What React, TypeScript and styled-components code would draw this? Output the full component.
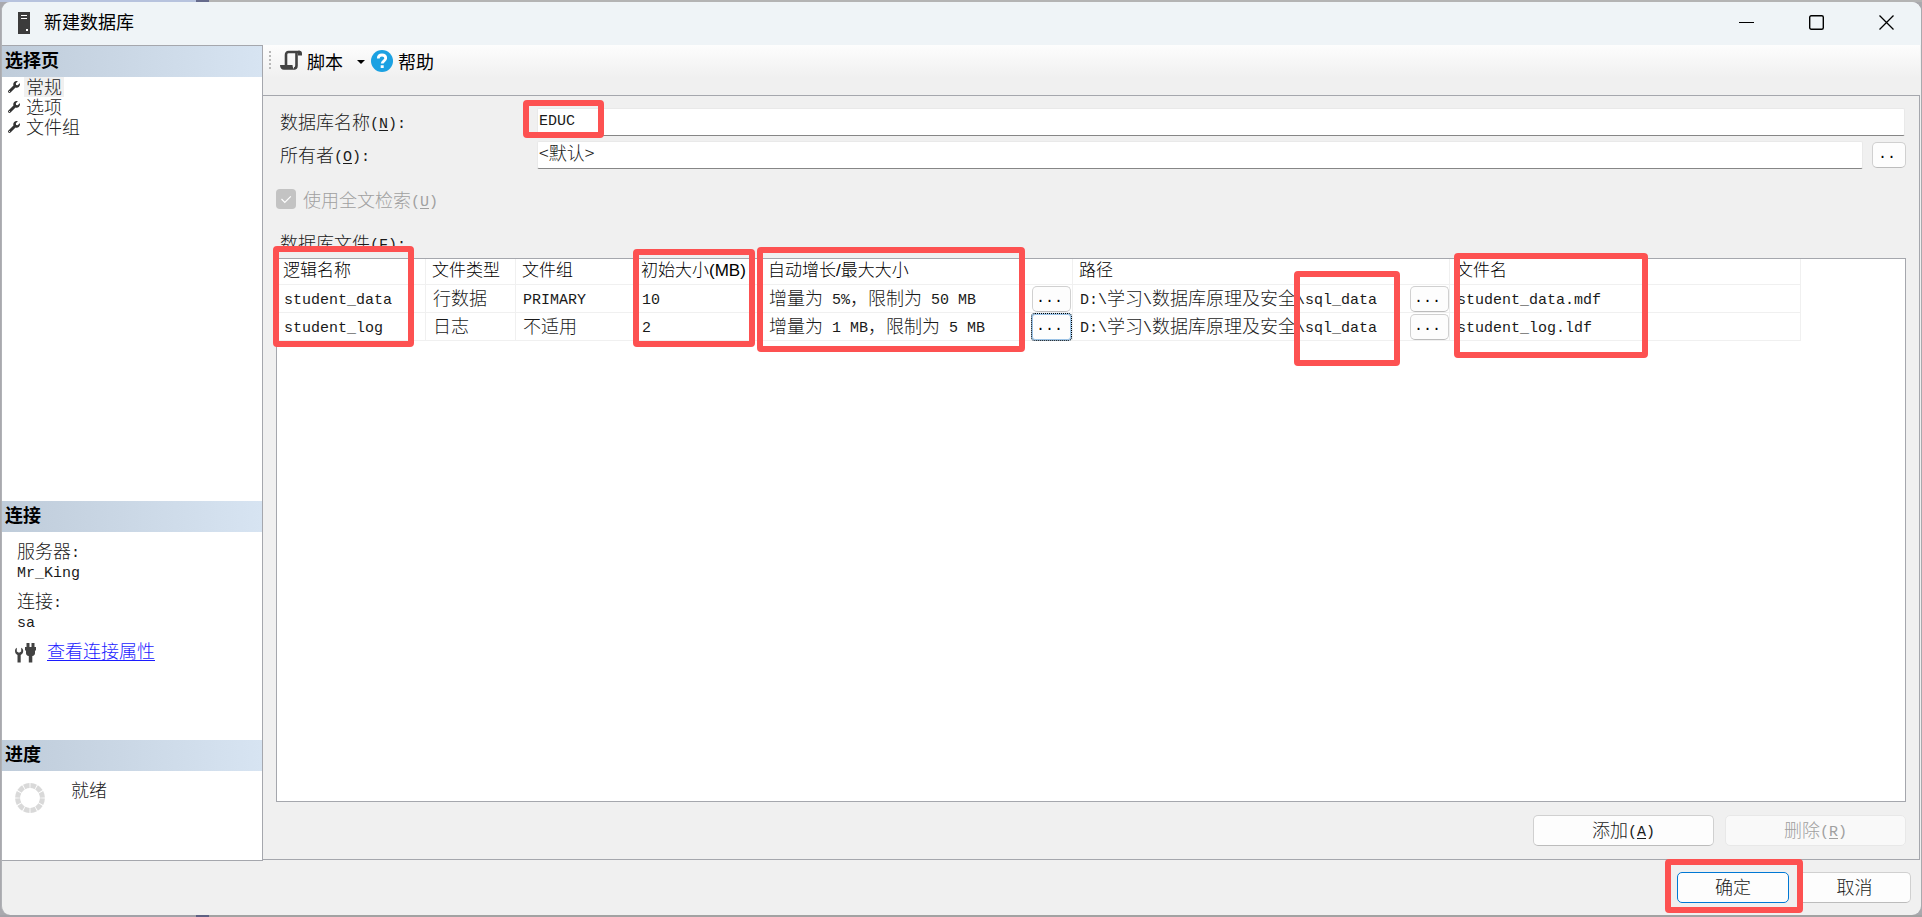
import React from 'react';
import styled, { createGlobalStyle, css } from 'styled-components';
import { FaWrench } from 'react-icons/fa';

const cjk = '"Noto Sans CJK SC", sans-serif';
const ui = '"Liberation Sans", "Noto Sans CJK SC", sans-serif';
const line = '#a5a7ad';
const gridLine = '#f0f0f0';

const Global = createGlobalStyle`
  *, *::before, *::after { box-sizing: border-box; }
  body {
    margin: 0;
    color: #1a1a1a;
    background: #b4b4b4;
    font: 300 18px/20px ${cjk};
  }
  button, input { font: inherit; color: inherit; margin: 0; }
`;

const Desktop = styled.div`
  min-height: 100vh;
  display: flex;
  padding: 2px 1px;
  background:
    linear-gradient(90deg, #b7c3de 0 196px, #666b8c 196px 209px, #b4b4b4 209px) top / 100% 2px no-repeat,
    linear-gradient(90deg, #a2a2a8 0 196px, #5e6282 196px 209px, #a2a2a2 209px) bottom / 100% 2px no-repeat,
    #a9a9ae;
`;

const Dialog = styled.main`
  flex: 1;
  min-width: 0;
  display: flex;
  flex-direction: column;
  background: #f0f0f0;
  border: solid #b0b2b6;
  border-width: 0 0 0 1px;
  border-radius: 9px;
  overflow: hidden;
`;

const TitleBar = styled.header`
  height: 43px;
  flex: none;
  display: flex;
  align-items: center;
  padding: 0 0 2px 16px;
  background: #eff4f7;
`;

const Title = styled.h1`
  flex: 1;
  margin: 0 0 0 14px;
  padding-bottom: 3px;
  font: 400 18px/20px ${cjk};
  color: #000;
`;

const CaptionButton = styled.button`
  width: 70px;
  height: 41px;
  padding: 0;
  border: 0;
  background: none;
  display: grid;
  place-items: center;
`;

const Body = styled.div`
  flex: 1;
  display: flex;
  min-height: 0;
`;

const Sidebar = styled.aside`
  width: 261px;
  flex: none;
  display: flex;
  flex-direction: column;
  background: #fff;
  border: solid ${line};
  border-width: 1px 1px 1px 0;
`;

const SectionTitle = styled.h2`
  height: 31px;
  margin: 0;
  padding: 1px 3px;
  font: 700 18px/24px ${cjk};
  color: #000;
  background: linear-gradient(90deg, #bfccda, #d7e4f2);
`;

const PageList = styled.nav`
  flex: 1;
  display: flex;
  flex-direction: column;
  align-items: flex-start;
`;

const PageLink = styled.a<{ $active?: boolean }>`
  display: flex;
  align-items: center;
  height: 20px;
  padding-left: 6px;
  color: inherit;
  text-decoration: none;

  svg { color: #333; }

  span {
    margin-left: 4px;
    padding: 0 2px 2px;
    line-height: 18px;
    background: ${p => (p.$active ? '#f0f0f0' : 'transparent')};
  }
`;

const Connection = styled.dl`
  height: 208px;
  margin: 0;
  padding: 8px 15px;

  dt { line-height: 20px; }
  dd { margin: 0 0 10px; line-height: 20px; }
`;

const ConnectionLink = styled.div`
  display: flex;
  align-items: flex-start;
  gap: 11px;
  margin-left: -2px;

  svg { margin-top: 3px; }
  a { color: #1c1cff; text-underline-offset: 2px; text-decoration-thickness: 1px; }
`;

const Progress = styled.div`
  height: 89px;
  display: flex;
  align-items: flex-start;
  gap: 26px;
  padding: 8px 13px;

  svg { margin-top: 4px; }
`;

const Main = styled.div`
  flex: 1;
  min-width: 0;
  display: flex;
  flex-direction: column;
  padding-right: 1px;
`;

const Toolbar = styled.div`
  height: 50px;
  flex: none;
  display: flex;
  align-items: flex-start;
  padding: 4px 6px;
  background: linear-gradient(#fdfdfd, #f0f0f0 33px);
`;

const Grip = styled.span`
  width: 2px;
  height: 20px;
  margin: 2px 9px 0 0;
  background: repeating-linear-gradient(#b8b8b8 0 2px, transparent 2px 4px);
`;

const ToolButton = styled.button`
  display: flex;
  align-items: center;
  gap: 5px;
  height: 23px;
  padding: 0;
  border: 0;
  background: none;
  font: 400 18px/20px ${cjk};
  color: #000;
`;

const DropMark = styled.button`
  width: 28px;
  height: 25px;
  padding: 0 0 0 14px;
  border: 0;
  background: none;
  display: flex;
  align-items: center;

  &::before {
    content: '';
    border: solid transparent;
    border-width: 4px 4px 0;
    border-top-color: #000;
  }
`;

const Panel = styled.section`
  flex: 1;
  display: flex;
  flex-direction: column;
  margin-bottom: 1px;
  padding: 12px 13px 13px;
  border: solid ${line};
  border-width: 1px 1px 1px 0;
`;

const Field = styled.div`
  position: relative;
  display: flex;
  align-items: center;
  height: 28px;
  margin-bottom: 5px;
  padding-left: 4px;

  label { width: 257px; flex: none; padding-bottom: 3px; }
`;

const TextBox = styled.input`
  flex: 1;
  min-width: 0;
  height: 28px;
  padding: 0 1px 6px;
  border: 1px solid #e9e9e9;
  border-bottom-color: #868686;
  border-radius: 2px;
  background: #fff;
  outline: 0;
`;

const NameBox = styled(TextBox)`
  margin-right: 1px;
  padding-bottom: 2px;
  font: 15px/20px "Liberation Mono", monospace;
`;

const buttonFace = css`
  border: 1px solid #d0d0d0;
  border-bottom-color: #bcbcbc;
  border-radius: 5px;
  background: #fdfdfd;
`;

const DotsButton = styled.button<{ $focused?: boolean }>`
  ${buttonFace}
  display: block;
  width: 39px;
  height: 26px;
  padding: 0 4px 0 0;
  font: 15px/20px "Liberation Mono", monospace;
  color: #000;
  ${p => p.$focused && css`
    border-color: #9cc3e6;
    border-radius: 3px;
    box-shadow: 0 0 0 1px #b5d5f0;
    outline: 1px dotted #000;
  `}
`;

const OwnerButton = styled(DotsButton)`
  width: 34px;
  margin-left: 9px;
`;

const CheckRow = styled.label`
  display: flex;
  align-items: center;
  gap: 7px;
  height: 20px;
  margin: 15px 0 23px;
  color: #a0a0a0;

  span { padding-bottom: 1px; }
`;

const CheckBox = styled.input`
  appearance: none;
  width: 20px;
  height: 20px;
  border-radius: 4px;
  background: #c3c3c3 url("data:image/svg+xml,%3Csvg xmlns='http://www.w3.org/2000/svg' width='20' height='20' fill='none' stroke='white' stroke-width='1.2'%3E%3Cpath d='M5.5 10l3.3 3.3 6-6'/%3E%3C/svg%3E");
`;

const GridLabel = styled.div`
  height: 26px;
  padding-left: 4px;
`;

const Grid = styled.div`
  position: relative;
  flex: 1;
  background: #fff;
  border: 1px solid ${line};
`;

const FileTable = styled.table`
  width: 1524px;
  table-layout: fixed;
  border-spacing: 0;
  white-space: nowrap;

  th, td {
    padding: 0 0 3px 7px;
    border: solid ${gridLine};
    border-width: 0 1px 1px 0;
    text-align: left;
  }
  th {
    height: 26px;
    padding: 0 0 2px 6px;
    font: 300 17px/20px ${ui};
    color: #000;
  }
  td { height: 28px; }
`;

const OpenCell = styled.td`
  && { border-right: 0; }
`;

const ButtonCell = styled.td`
  && { padding: 0 0 0 2px; }
`;

const GridActions = styled.div`
  display: flex;
  justify-content: flex-end;
  gap: 11px;
  margin-top: 13px;
`;

const Button = styled.button<{ $width: number; $default?: boolean }>`
  ${buttonFace}
  width: ${p => p.$width}px;
  height: 31px;
  padding: 0 0 3px;
  ${p => p.$default && css`border-color: #0078d4;`}

  &:disabled { color: #a0a0a0; border-color: #e8e8e8; background: #f9f9f9; }
`;

const Footer = styled.footer`
  height: 54px;
  flex: none;
  display: flex;
  justify-content: flex-end;
  gap: 9px;
  padding: 11px 10px 0 0;
`;

const Marked = styled.div`
  position: relative;
  height: 31px;
`;

const Mark = styled.span<{ $x: number; $y: number; $w: number; $h: number }>`
  position: absolute;
  z-index: 1;
  left: ${p => p.$x}px;
  top: ${p => p.$y}px;
  width: ${p => p.$w}px;
  height: ${p => p.$h}px;
  border: 6px solid #fd5151;
  border-radius: 4px;
  pointer-events: none;
`;

const Latin = styled.span`
  font-family: "Liberation Mono", monospace;
  font-size: 15px;
  font-weight: 400;
  line-height: 0;
  vertical-align: 1px;
  white-space: pre;
`;

const Key = styled.u`
  text-underline-offset: 2px;
`;

/* Sets Latin runs in the half-width face beside full-width characters. */
function Text({ children, hotkey }: { children: string; hotkey?: string }) {
  const runs = children.match(/[\x20-\x7e]+|[^\x20-\x7e]+/g) ?? [];
  return (
    <>
      {runs.map((run, i) => (/[\x20-\x7e]/.test(run) ? <Latin key={i}>{run}</Latin> : run))}
      {hotkey && <Latin>(<Key>{hotkey}</Key>)</Latin>}
    </>
  );
}

const ServerIcon = () => (
  <svg width="12" height="22" viewBox="0 0 12 22">
    <path fill="#3c3c3c" d="M0 0h12v22H0z" />
    <path stroke="#fff" d="M3 3.5h6M3 6.5h6" />
    <path fill="#fff" d="M8 17h2v2H8z" />
  </svg>
);

const ScriptIcon = () => (
  <svg width="22" height="21" viewBox="0 0 22 21" fill="none" stroke="#424242" strokeWidth="2.6">
    <path d="M6 15V5C6 3 7 2 8.500 2H20M16.500 3v12.500c0 2-1 3-2.500 3" />
    <path fill="#424242" stroke="none" d="M18 .700h1.500C21.200.700 22 2 22 3.500V5.500h-4z" />
    <path fill="#424242" stroke="none" d="M0 15h12.500c0 2 .7 3 2 4.800H4C1.500 19.800 0 18 0 15z" />
  </svg>
);

const HelpIcon = () => (
  <svg width="22" height="22" viewBox="0 0 22 22" fill="none">
    <circle cx="11" cy="11" r="11" fill="#1ba1e2" />
    <path d="M7.300 8.600C7.300 6.300 9 5 11 5s3.700 1.200 3.700 3.200c0 2.500-3.500 2.700-3.500 5.400" stroke="#fff" strokeWidth="2.800" />
    <path fill="#fff" d="M9.700 15.200h3v2.800h-3z" />
  </svg>
);

const PlugIcon = () => (
  <svg width="21" height="20" viewBox="0 0 21 20" fill="#424242">
    <path d="M0 8C0 6.500.7 5.400 1.800 4.800V8.500L4 9.800 6.200 8.500V4.800C7.400 5.400 8.200 6.500 8.200 8c0 2-1 3.200-2.500 4v7.500H2.500V12C1 11.200 0 10 0 8z" />
    <path d="M11.500 0h3v4h2V0h3v4H21v3.500h-1V10c0 1.700-1 2.800-2.700 3v6.500h-3.500V13C12 12.800 11 11.700 11 10V7.500h-1V4h1.500z" />
  </svg>
);

const Spinner = () => (
  <svg width="30" height="30" viewBox="0 0 30 30">
    <circle cx="15" cy="15" r="12.400" fill="none" stroke="#d9d9d9" strokeWidth="5" pathLength="120" strokeDasharray="8.600 1.400" strokeDashoffset="-0.700" />
  </svg>
);

const columns = [149, 90, 119, 127, 268, 43, 335, 42, 351];

const files = [
  { name: 'student_data', type: '行数据', group: 'PRIMARY', size: '10', growth: '增量为 5%，限制为 50 MB', file: 'student_data.mdf' },
  { name: 'student_log', type: '日志', group: '不适用', size: '2', growth: '增量为 1 MB，限制为 5 MB', file: 'student_log.ldf', focused: true },
];

export default function App() {
  return (
    <Desktop>
      <Global />
      <Dialog>
        <TitleBar>
          <ServerIcon />
          <Title>新建数据库</Title>
          <CaptionButton aria-label="最小化">
            <svg width="15" height="15"><path d="M0 7.500h15" stroke="#000" /></svg>
          </CaptionButton>
          <CaptionButton aria-label="最大化">
            <svg width="15" height="15"><rect x=".7" y=".7" width="13.600" height="13.600" rx="1.500" fill="none" stroke="#000" strokeWidth="1.400" /></svg>
          </CaptionButton>
          <CaptionButton aria-label="关闭">
            <svg width="15" height="15"><path d="M.5.5l14 14M14.500.5l-14 14" stroke="#000" strokeWidth="1.300" /></svg>
          </CaptionButton>
        </TitleBar>
        <Body>
          <Sidebar>
            <SectionTitle>选择页</SectionTitle>
            <PageList>
              {['常规', '选项', '文件组'].map((page, i) => (
                <PageLink href="#" key={page} $active={i === 0}>
                  <FaWrench size={12} />
                  <span>{page}</span>
                </PageLink>
              ))}
            </PageList>
            <SectionTitle>连接</SectionTitle>
            <Connection>
              <dt><Text>服务器:</Text></dt>
              <dd><Text>Mr_King</Text></dd>
              <dt><Text>连接:</Text></dt>
              <dd><Text>sa</Text></dd>
              <ConnectionLink>
                <PlugIcon />
                <a href="#">查看连接属性</a>
              </ConnectionLink>
            </Connection>
            <SectionTitle>进度</SectionTitle>
            <Progress>
              <Spinner />
              <span>就绪</span>
            </Progress>
          </Sidebar>
          <Main>
            <Toolbar>
              <Grip />
              <ToolButton><ScriptIcon />脚本</ToolButton>
              <DropMark aria-label="脚本选项" />
              <ToolButton><HelpIcon />帮助</ToolButton>
            </Toolbar>
            <Panel>
              <Field>
                <label htmlFor="db-name"><Text hotkey="N">数据库名称</Text><Latin>:</Latin></label>
                <NameBox id="db-name" defaultValue="EDUC" />
                <Mark $x={247} $y={-8} $w={81} $h={38} />
              </Field>
              <Field>
                <label htmlFor="owner"><Text hotkey="O">所有者</Text><Latin>:</Latin></label>
                <TextBox id="owner" defaultValue="<默认>" />
                <OwnerButton>..</OwnerButton>
              </Field>
              <CheckRow>
                <CheckBox type="checkbox" defaultChecked disabled />
                <span><Text hotkey="U">使用全文检索</Text></span>
              </CheckRow>
              <GridLabel id="files-label"><Text hotkey="F">数据库文件</Text><Latin>:</Latin></GridLabel>
              <Grid>
                <FileTable aria-labelledby="files-label">
                  <colgroup>
                    {columns.map((width, i) => <col key={i} width={width} />)}
                  </colgroup>
                  <thead>
                    <tr>
                      <th>逻辑名称</th>
                      <th>文件类型</th>
                      <th>文件组</th>
                      <th>初始大小(MB)</th>
                      <th colSpan={2}>自动增长/最大大小</th>
                      <th colSpan={2}>路径</th>
                      <th>文件名</th>
                    </tr>
                  </thead>
                  <tbody>
                    {files.map(f => (
                      <tr key={f.name}>
                        <td><Text>{f.name}</Text></td>
                        <td><Text>{f.type}</Text></td>
                        <td><Text>{f.group}</Text></td>
                        <td><Text>{f.size}</Text></td>
                        <OpenCell><Text>{f.growth}</Text></OpenCell>
                        <ButtonCell><DotsButton $focused={f.focused}>...</DotsButton></ButtonCell>
                        <OpenCell><Text>{'D:\\学习\\数据库原理及安全\\sql_data'}</Text></OpenCell>
                        <ButtonCell><DotsButton>...</DotsButton></ButtonCell>
                        <td><Text>{f.file}</Text></td>
                      </tr>
                    ))}
                  </tbody>
                </FileTable>
                <Mark $x={-4} $y={-13} $w={141} $h={101} />
                <Mark $x={356} $y={-10} $w={122} $h={98} />
                <Mark $x={480} $y={-12} $w={268} $h={105} />
                <Mark $x={1017} $y={12} $w={106} $h={95} />
                <Mark $x={1177} $y={-6} $w={194} $h={105} />
              </Grid>
              <GridActions>
                <Button $width={181}><Text hotkey="A">添加</Text></Button>
                <Button $width={181} disabled><Text hotkey="R">删除</Text></Button>
              </GridActions>
            </Panel>
          </Main>
        </Body>
        <Footer>
          <Marked>
            <Button $width={112} $default>确定</Button>
            <Mark $x={-12} $y={-13} $w={138} $h={54} />
          </Marked>
          <Button $width={113}>取消</Button>
        </Footer>
      </Dialog>
    </Desktop>
  );
}
